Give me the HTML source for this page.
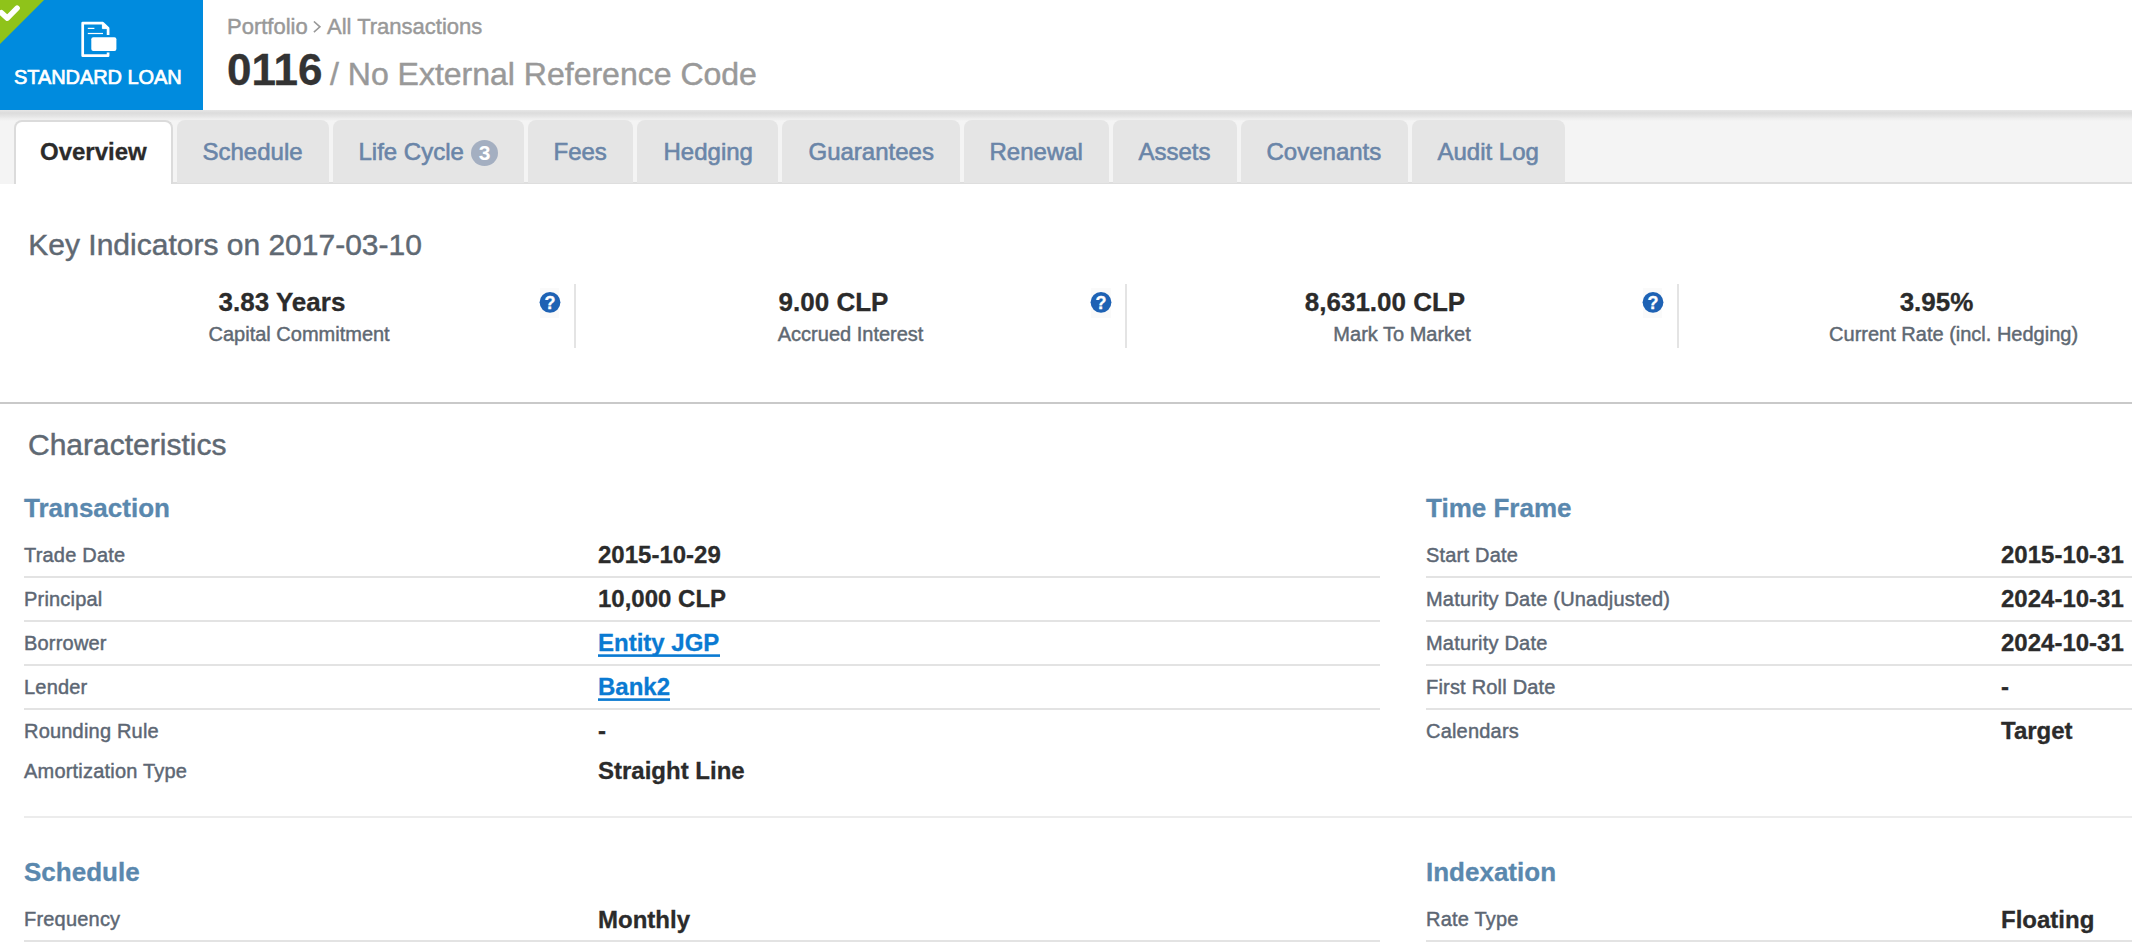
<!DOCTYPE html>
<html><head><meta charset="utf-8"><title>0116</title>
<style>
html,body{margin:0;padding:0;}
html{overflow:hidden;width:2132px;height:944px;}
body{width:2132px;height:944px;overflow:hidden;background:#fff;position:relative;font-family:"Liberation Sans",sans-serif;}
.t{position:absolute;white-space:pre;-webkit-text-stroke:0.45px;}
.a{position:absolute;}
.tab{position:absolute;top:120px;height:63px;background:#e5e5e5;border-radius:8px 8px 0 0;}
.ln{position:absolute;height:2px;background:#e3e3e3;}
a{color:inherit;}
</style></head><body>
<div id="page" style="position:absolute;left:0;top:0;width:2132px;height:944px;overflow:hidden;">
<div class="a" style="left:0;top:110px;width:2132px;height:74px;background:#f4f4f4;"></div>
<div class="a" style="left:0;top:110px;width:2132px;height:11px;background:linear-gradient(#e6e6e6 0,#dcdcdc 3px,#e4e4e4 6px,#efefef 9px,#f4f4f4 11px);"></div>
<div class="a" style="left:15px;top:182px;width:2117px;height:2px;background:#dedede;"></div>
<div class="a" style="left:0;top:0;width:2132px;height:110px;background:#fff;"></div>
<div class="a" style="left:0;top:0;width:203px;height:110px;background:#008bde;overflow:hidden;">
<svg class="a" style="left:0;top:0" width="203" height="110" viewBox="0 0 203 110"><polygon points="0,0 44,0 0,44" fill="#8fc31a"/><polyline points="1.4,12.7 7.3,18.1 17.1,8.1" fill="none" stroke="#fff" stroke-width="5.5" stroke-linecap="round" stroke-linejoin="round"/><path d="M108.1,35 V28.2 L102.8,23.1 H82.7 V55.7 H108.1 V52.5" fill="none" stroke="#fff" stroke-width="2.7" stroke-linejoin="round"/><path d="M102.4,23 V28.6 H108.3 Z" fill="#fff" stroke="#fff" stroke-width="1"/><rect x="87.8" y="27.8" width="6.6" height="1.2" fill="#fff"/><rect x="87.8" y="32.9" width="15.2" height="1.2" fill="#fff"/><rect x="91.3" y="37.2" width="25.1" height="13.8" rx="2" fill="#fff"/></svg>
<div class="t" style="left:14px;top:65.27px;font-size:20px;line-height:24px;color:#fff;letter-spacing:-0.07px;-webkit-text-stroke:0.7px;">STANDARD LOAN</div>
</div>
<div class="t" style="left:227px;top:13.78px;font-size:22px;line-height:26px;color:#999;">Portfolio</div>
<svg class="a" style="left:312px;top:21px" width="10" height="14" viewBox="0 0 10 14"><polyline points="1.9,0.5 7.9,5.8 1.9,11.1" fill="none" stroke="#999" stroke-width="1.6"/></svg>
<div class="t" style="left:327px;top:13.78px;font-size:22px;line-height:26px;color:#999;">All Transactions</div>
<div class="t" style="left:227px;top:43.35px;font-size:44px;line-height:53px;color:#333;font-weight:700;-webkit-text-stroke:0.3px;">0116</div>
<div class="t" style="left:330px;top:55.01px;font-size:32px;line-height:38px;color:#999;">/ No External Reference Code</div>
<div class="a" style="left:14px;top:120px;width:155px;height:62px;background:#fff;border:2px solid #dbdbdb;border-bottom:none;border-radius:8px 8px 0 0;"></div>
<div class="t" style="left:40px;top:136.78px;font-size:24px;line-height:29px;color:#2b2b2b;font-weight:700;-webkit-text-stroke:0.3px;">Overview</div>
<div class="tab" style="left:177px;width:152px;"></div>
<div class="t" style="left:202.5px;top:136.68px;font-size:24px;line-height:29px;color:#6a85a8;-webkit-text-stroke:0.6px;">Schedule</div>
<div class="tab" style="left:333px;width:191px;"></div>
<div class="t" style="left:358.5px;top:136.68px;font-size:24px;line-height:29px;color:#6a85a8;-webkit-text-stroke:0.6px;">Life Cycle</div>
<div class="tab" style="left:528px;width:105px;"></div>
<div class="t" style="left:553.5px;top:136.68px;font-size:24px;line-height:29px;color:#6a85a8;-webkit-text-stroke:0.6px;">Fees</div>
<div class="tab" style="left:637px;width:141px;"></div>
<div class="t" style="left:663.5px;top:136.68px;font-size:24px;line-height:29px;color:#6a85a8;-webkit-text-stroke:0.6px;">Hedging</div>
<div class="tab" style="left:782px;width:178px;"></div>
<div class="t" style="left:808.5px;top:136.68px;font-size:24px;line-height:29px;color:#6a85a8;-webkit-text-stroke:0.6px;">Guarantees</div>
<div class="tab" style="left:964px;width:145px;"></div>
<div class="t" style="left:989.5px;top:136.68px;font-size:24px;line-height:29px;color:#6a85a8;-webkit-text-stroke:0.6px;">Renewal</div>
<div class="tab" style="left:1113px;width:124px;"></div>
<div class="t" style="left:1138.5px;top:136.68px;font-size:24px;line-height:29px;color:#6a85a8;-webkit-text-stroke:0.6px;">Assets</div>
<div class="tab" style="left:1241px;width:167px;"></div>
<div class="t" style="left:1266.5px;top:136.68px;font-size:24px;line-height:29px;color:#6a85a8;-webkit-text-stroke:0.6px;">Covenants</div>
<div class="tab" style="left:1412px;width:153px;"></div>
<div class="t" style="left:1437.5px;top:136.68px;font-size:24px;line-height:29px;color:#6a85a8;-webkit-text-stroke:0.6px;">Audit Log</div>
<div class="a" style="left:471px;top:139.8px;width:27.2px;height:26px;border-radius:50%;background:#a4afc1;"></div>
<div class="t" style="left:471px;top:140.42px;font-size:21px;line-height:25px;color:#fff;font-weight:700;-webkit-text-stroke:0.3px;width:27.2px;text-align:center;-webkit-text-stroke:0;">3</div>
<div class="t" style="left:28.3px;top:226.80px;font-size:30px;line-height:36px;color:#5f6973;">Key Indicators on 2017-03-10</div>
<div class="t" style="left:-18.0px;top:286.69px;font-size:26px;line-height:31px;color:#2b2b2b;font-weight:700;-webkit-text-stroke:0.3px;width:600px;text-align:center;">3.83 Years</div>
<div class="t" style="left:-0.8999999999999773px;top:321.57px;font-size:20px;line-height:24px;color:#5f6973;width:600px;text-align:center;">Capital Commitment</div>
<div class="a" style="left:539.9px;top:288px;width:19.6px;height:29.6px;background:#fafafa;"></div>
<svg class="a" style="left:536.7px;top:289px" width="26" height="26" viewBox="0 0 26 26"><circle cx="13" cy="13.3" r="10.4" fill="#1e62b4"/><text x="13.1" y="19.7" text-anchor="middle" font-family="Liberation Sans" font-weight="700" font-size="18" fill="#fff" stroke="#fff" stroke-width="0.3">?</text></svg>
<div class="t" style="left:533.5px;top:286.69px;font-size:26px;line-height:31px;color:#2b2b2b;font-weight:700;-webkit-text-stroke:0.3px;width:600px;text-align:center;">9.00 CLP</div>
<div class="t" style="left:550.6px;top:321.57px;font-size:20px;line-height:24px;color:#5f6973;width:600px;text-align:center;">Accrued Interest</div>
<div class="a" style="left:574px;top:284px;width:2px;height:64px;background:#e4e4e4;"></div>
<div class="a" style="left:1091.3px;top:288px;width:19.6px;height:29.6px;background:#fafafa;"></div>
<svg class="a" style="left:1088.1px;top:289px" width="26" height="26" viewBox="0 0 26 26"><circle cx="13" cy="13.3" r="10.4" fill="#1e62b4"/><text x="13.1" y="19.7" text-anchor="middle" font-family="Liberation Sans" font-weight="700" font-size="18" fill="#fff" stroke="#fff" stroke-width="0.3">?</text></svg>
<div class="t" style="left:1085.0px;top:286.69px;font-size:26px;line-height:31px;color:#2b2b2b;font-weight:700;-webkit-text-stroke:0.3px;width:600px;text-align:center;">8,631.00 CLP</div>
<div class="t" style="left:1102.1px;top:321.57px;font-size:20px;line-height:24px;color:#5f6973;width:600px;text-align:center;">Mark To Market</div>
<div class="a" style="left:1125px;top:284px;width:2px;height:64px;background:#e4e4e4;"></div>
<div class="a" style="left:1642.9px;top:288px;width:19.6px;height:29.6px;background:#fafafa;"></div>
<svg class="a" style="left:1639.7px;top:289px" width="26" height="26" viewBox="0 0 26 26"><circle cx="13" cy="13.3" r="10.4" fill="#1e62b4"/><text x="13.1" y="19.7" text-anchor="middle" font-family="Liberation Sans" font-weight="700" font-size="18" fill="#fff" stroke="#fff" stroke-width="0.3">?</text></svg>
<div class="t" style="left:1636.5px;top:286.69px;font-size:26px;line-height:31px;color:#2b2b2b;font-weight:700;-webkit-text-stroke:0.3px;width:600px;text-align:center;">3.95%</div>
<div class="t" style="left:1653.6px;top:321.57px;font-size:20px;line-height:24px;color:#5f6973;width:600px;text-align:center;">Current Rate (incl. Hedging)</div>
<div class="a" style="left:1677px;top:284px;width:2px;height:64px;background:#e4e4e4;"></div>
<div class="a" style="left:0;top:402px;width:2132px;height:2px;background:#c9c9c9;"></div>
<div class="t" style="left:28px;top:426.61px;font-size:30px;line-height:36px;color:#5f6973;">Characteristics</div>
<div class="t" style="left:24px;top:492.69px;font-size:26px;line-height:31px;color:#5a88ae;font-weight:700;-webkit-text-stroke:0.3px;">Transaction</div>
<div class="t" style="left:24px;top:543.27px;font-size:20px;line-height:24px;color:#5d6774;letter-spacing:0.2px;">Trade Date</div>
<div class="t" style="left:598px;top:540.38px;font-size:24px;line-height:29px;color:#2b2b2b;font-weight:700;-webkit-text-stroke:0.3px;">2015-10-29</div>
<div class="ln" style="left:24px;top:576.2px;width:1356px;"></div>
<div class="t" style="left:24px;top:587.27px;font-size:20px;line-height:24px;color:#5d6774;letter-spacing:0.2px;">Principal</div>
<div class="t" style="left:598px;top:584.38px;font-size:24px;line-height:29px;color:#2b2b2b;font-weight:700;-webkit-text-stroke:0.3px;">10,000 CLP</div>
<div class="ln" style="left:24px;top:620.2px;width:1356px;"></div>
<div class="t" style="left:24px;top:631.27px;font-size:20px;line-height:24px;color:#5d6774;letter-spacing:0.2px;">Borrower</div>
<div class="t" style="left:598px;top:628.38px;font-size:24px;line-height:29px;color:#0a7ad2;font-weight:700;-webkit-text-stroke:0.3px;">Entity JGP</div>
<svg class="a" style="left:598px;top:654px" width="122" height="4"><rect x="0" y="0.3" width="122" height="2.6" fill="#0a7ad2"/></svg>
<div class="ln" style="left:24px;top:664.2px;width:1356px;"></div>
<div class="t" style="left:24px;top:675.27px;font-size:20px;line-height:24px;color:#5d6774;letter-spacing:0.2px;">Lender</div>
<div class="t" style="left:598px;top:672.38px;font-size:24px;line-height:29px;color:#0a7ad2;font-weight:700;-webkit-text-stroke:0.3px;">Bank2</div>
<svg class="a" style="left:598px;top:698px" width="72" height="4"><rect x="0" y="0.3" width="72" height="2.6" fill="#0a7ad2"/></svg>
<div class="ln" style="left:24px;top:708.2px;width:1356px;"></div>
<div class="t" style="left:24px;top:719.27px;font-size:20px;line-height:24px;color:#5d6774;letter-spacing:0.2px;">Rounding Rule</div>
<div class="t" style="left:598px;top:716.38px;font-size:24px;line-height:29px;color:#2b2b2b;font-weight:700;-webkit-text-stroke:0.3px;">-</div>
<div class="t" style="left:24px;top:759.27px;font-size:20px;line-height:24px;color:#5d6774;letter-spacing:0.2px;">Amortization Type</div>
<div class="t" style="left:598px;top:756.38px;font-size:24px;line-height:29px;color:#2b2b2b;font-weight:700;-webkit-text-stroke:0.3px;">Straight Line</div>
<div class="t" style="left:1426px;top:492.69px;font-size:26px;line-height:31px;color:#5a88ae;font-weight:700;-webkit-text-stroke:0.3px;">Time Frame</div>
<div class="t" style="left:1426px;top:543.27px;font-size:20px;line-height:24px;color:#5d6774;letter-spacing:0.2px;">Start Date</div>
<div class="t" style="left:2001px;top:540.38px;font-size:24px;line-height:29px;color:#2b2b2b;font-weight:700;-webkit-text-stroke:0.3px;">2015-10-31</div>
<div class="ln" style="left:1426px;top:576.2px;width:714px;"></div>
<div class="t" style="left:1426px;top:587.27px;font-size:20px;line-height:24px;color:#5d6774;letter-spacing:0.2px;">Maturity Date (Unadjusted)</div>
<div class="t" style="left:2001px;top:584.38px;font-size:24px;line-height:29px;color:#2b2b2b;font-weight:700;-webkit-text-stroke:0.3px;">2024-10-31</div>
<div class="ln" style="left:1426px;top:620.2px;width:714px;"></div>
<div class="t" style="left:1426px;top:631.27px;font-size:20px;line-height:24px;color:#5d6774;letter-spacing:0.2px;">Maturity Date</div>
<div class="t" style="left:2001px;top:628.38px;font-size:24px;line-height:29px;color:#2b2b2b;font-weight:700;-webkit-text-stroke:0.3px;">2024-10-31</div>
<div class="ln" style="left:1426px;top:664.2px;width:714px;"></div>
<div class="t" style="left:1426px;top:675.27px;font-size:20px;line-height:24px;color:#5d6774;letter-spacing:0.2px;">First Roll Date</div>
<div class="t" style="left:2001px;top:672.38px;font-size:24px;line-height:29px;color:#2b2b2b;font-weight:700;-webkit-text-stroke:0.3px;">-</div>
<div class="ln" style="left:1426px;top:708.2px;width:714px;"></div>
<div class="t" style="left:1426px;top:719.27px;font-size:20px;line-height:24px;color:#5d6774;letter-spacing:0.2px;">Calendars</div>
<div class="t" style="left:2001px;top:716.38px;font-size:24px;line-height:29px;color:#2b2b2b;font-weight:700;-webkit-text-stroke:0.3px;">Target</div>
<div class="a" style="left:24px;top:816px;width:2110px;height:2px;background:#ececec;"></div>
<div class="t" style="left:24px;top:856.89px;font-size:26px;line-height:31px;color:#5a88ae;font-weight:700;-webkit-text-stroke:0.3px;">Schedule</div>
<div class="t" style="left:24px;top:907.47px;font-size:20px;line-height:24px;color:#5d6774;letter-spacing:0.2px;">Frequency</div>
<div class="t" style="left:598px;top:904.58px;font-size:24px;line-height:29px;color:#2b2b2b;font-weight:700;-webkit-text-stroke:0.3px;">Monthly</div>
<div class="ln" style="left:24px;top:940.4px;width:1356px;"></div>
<div class="t" style="left:1426px;top:856.89px;font-size:26px;line-height:31px;color:#5a88ae;font-weight:700;-webkit-text-stroke:0.3px;">Indexation</div>
<div class="t" style="left:1426px;top:907.47px;font-size:20px;line-height:24px;color:#5d6774;letter-spacing:0.2px;">Rate Type</div>
<div class="t" style="left:2001px;top:904.58px;font-size:24px;line-height:29px;color:#2b2b2b;font-weight:700;-webkit-text-stroke:0.3px;">Floating</div>
<div class="ln" style="left:1426px;top:940.4px;width:714px;"></div>
</div>
</body></html>
